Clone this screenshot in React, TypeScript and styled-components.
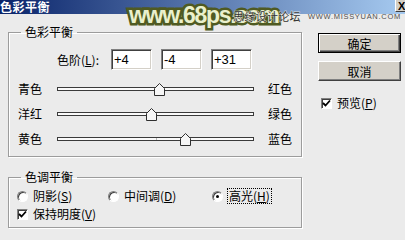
import { createGlobalStyle, styled } from "styled-components";

const GlobalStyle = createGlobalStyle`
  html, body {
    margin: 0;
    padding: 0;
    background: #ebebeb;
  }
  body {
    font-family: "Noto Sans CJK SC", "Liberation Sans", sans-serif;
    font-size: 12px;
    color: #000;
  }
`;

interface SliderProp {
  left: string;
  right: string;
  value: number;
}

const sliders: SliderProp[] = [
  { left: "青色", right: "红色", value: 4 },
  { left: "洋红", right: "绿色", value: -4 },
  { left: "黄色", right: "蓝色", value: 31 },
];

const levels = ["+4", "-4", "+31"];

const Slider = ({ left, right, value }: SliderProp) => {
  const pct = (value + 100) / 200;
  return (
    <SliderRow>
      <SideLabel>{left}</SideLabel>
      <Track>
        <Tick />
        <Thumb style={{ left: `calc(${pct * 100}% - 5.5px)` }}>
          <svg width="11" height="13" viewBox="0 0 11 13">
            <polygon
              points="0.5,5.5 5.5,0.5 10.5,5.5 10.5,12.5 0.5,12.5"
              fill="#f6f6f6"
              stroke="#2e2e2e"
            />
          </svg>
        </Thumb>
      </Track>
      <RightLabel>{right}</RightLabel>
    </SliderRow>
  );
};

const CheckMark = () => (
  <svg width="9" height="9" viewBox="0 0 9 9">
    <path d="M1 4 L3.5 6.5 L8 1.5" fill="none" stroke="#000" strokeWidth="1.8" />
  </svg>
);

const App = () => {
  return (
    <>
      <GlobalStyle />
      <Dialog>
        <TitleBar>
          <TitleText>色彩平衡</TitleText>
          <CloseButton>X</CloseButton>
        </TitleBar>
        <Body>
          <LeftCol>
            <Group $pb={5}>
              <Legend>色彩平衡</Legend>
              <LevelRow>
                <LevelLabel>
                  色阶(<u>L</u>):
                </LevelLabel>
                {levels.map((v) => (
                  <LevelInput key={v}>{v}</LevelInput>
                ))}
              </LevelRow>
              <SliderList>
                {sliders.map((s) => (
                  <Slider key={s.left} {...s} />
                ))}
              </SliderList>
            </Group>
            <Group $pb={7} $mt={13}>
              <Legend>色调平衡</Legend>
              <RadioRow>
                <Option $width={91}>
                  <Radio />
                  <span>
                    阴影(<u>S</u>)
                  </span>
                </Option>
                <Option $width={104}>
                  <Radio />
                  <span>
                    中间调(<u>D</u>)
                  </span>
                </Option>
                <Option>
                  <Radio $checked />
                  <Focused>
                    高光(<u>H</u>)
                  </Focused>
                </Option>
              </RadioRow>
              <CheckRow>
                <CheckBox>
                  <CheckMark />
                </CheckBox>
                <span>
                  保持明度(<u>V</u>)
                </span>
              </CheckRow>
            </Group>
          </LeftCol>
          <RightCol>
            <Button $primary>确定</Button>
            <Button>取消</Button>
            <PreviewRow>
              <CheckBox>
                <CheckMark />
              </CheckBox>
              <span>
                预览(<u>P</u>)
              </span>
            </PreviewRow>
          </RightCol>
        </Body>
        <Watermark>www.68ps.com</Watermark>
        <SiteName>思缘设计论坛</SiteName>
        <SiteUrl>WWW.MISSYUAN.COM</SiteUrl>
      </Dialog>
    </>
  );
};

export default App;

const Dialog = styled.div`
  position: relative;
  width: 405px;
  height: 240px;
  overflow: hidden;
  background: #ebebeb;
`;

const TitleBar = styled.div`
  height: 14px;
  display: flex;
  justify-content: space-between;
  background: linear-gradient(to right, #0a246a, #a6caf0);
`;

const TitleText = styled.span`
  color: #fff;
  font-weight: bold;
  font-size: 12px;
  line-height: 14px;
  letter-spacing: 0.5px;
`;

const CloseButton = styled.span`
  width: 10px;
  height: 12px;
  box-sizing: border-box;
  padding-left: 2px;
  background: #d4d0c8;
  border-left: 1px solid #fff;
  border-bottom: 1px solid #404040;
  font-family: "Liberation Sans", sans-serif;
  font-weight: bold;
  font-size: 11px;
  line-height: 12px;
`;

const Body = styled.div`
  display: flex;
  padding: 11px 0 0 8px;
`;

const LeftCol = styled.div`
  width: 294px;
  display: flex;
  flex-direction: column;
`;

const Group = styled.fieldset<{ $pb: number; $mt?: number }>`
  margin: ${({ $mt }) => $mt ?? 0}px 0 0;
  padding: 0 0 ${({ $pb }) => $pb}px;
  min-inline-size: 0;
  border: 1px solid #9c9c9c;
  box-shadow: 1px 1px 0 #fff, inset 1px 1px 0 #fff;
`;

const Legend = styled.legend`
  margin-left: 12px;
  padding: 0 4px;
  font-size: 12px;
  line-height: 14px;
`;

const LevelRow = styled.div`
  display: flex;
  align-items: center;
  gap: 9px;
  margin-top: 10px;
  padding-left: 48px;
  height: 21px;
`;

const LevelLabel = styled.span`
  width: 45px;
  line-height: 14px;
`;

const LevelInput = styled.div`
  width: 41px;
  height: 21px;
  box-sizing: border-box;
  padding: 2px 0 0 2px;
  background: #fff;
  border: 1px solid;
  border-color: #808080 #fff #fff #808080;
  box-shadow: inset 1px 1px 0 #404040, inset -1px -1px 0 #d4d0c8;
  font-family: "Liberation Sans", sans-serif;
  font-size: 13px;
  line-height: 15px;
`;

const SliderList = styled.div`
  margin-top: 6px;
  display: flex;
  flex-direction: column;
`;

const SliderRow = styled.div`
  display: flex;
  align-items: center;
  height: 25px;
  padding-left: 9px;
`;

const SideLabel = styled.span`
  width: 39px;
  line-height: 14px;
`;

const RightLabel = styled.span`
  margin-left: 14px;
  line-height: 14px;
`;

const Track = styled.div`
  position: relative;
  width: 197px;
  height: 4px;
  box-sizing: border-box;
  border: 1px solid #3a3a3a;
  background: #fafafa;
`;

const Tick = styled.span`
  position: absolute;
  left: 50%;
  top: 0;
  width: 1px;
  height: 100%;
  background: #b8b8b8;
`;

const Thumb = styled.span`
  position: absolute;
  top: -5px;
  width: 11px;
  height: 13px;
  line-height: 0;
`;

const RadioRow = styled.div`
  display: flex;
  align-items: center;
  margin-top: 6px;
  padding-left: 8px;
  height: 12px;
`;

const Option = styled.label<{ $width?: number }>`
  display: flex;
  align-items: center;
  gap: 5px;
  width: ${({ $width }) => ($width ? `${$width}px` : "auto")};
  line-height: 14px;
`;

const Radio = styled.span<{ $checked?: boolean }>`
  width: 11px;
  height: 11px;
  box-sizing: border-box;
  border-radius: 50%;
  border: 1px solid;
  border-color: #808080 #fff #fff #808080;
  box-shadow: inset 1px 1px 0 #404040;
  background: #fff;
  display: flex;
  align-items: center;
  justify-content: center;

  &::after {
    content: "";
    width: 3px;
    height: 3px;
    border-radius: 50%;
    background: ${({ $checked }) => ($checked ? "#000" : "transparent")};
  }
`;

const Focused = styled.span`
  outline: 1px dotted #000;
  outline-offset: 0;
  padding: 0 1px;
`;

const CheckRow = styled.div`
  display: flex;
  align-items: center;
  gap: 5px;
  margin-top: 6px;
  padding-left: 8px;
  height: 12px;
  line-height: 14px;
`;

const CheckBox = styled.span`
  width: 11px;
  height: 11px;
  box-sizing: border-box;
  border: 1px solid;
  border-color: #808080 #fff #fff #808080;
  box-shadow: inset 1px 1px 0 #404040;
  background: #fff;
  display: flex;
  align-items: center;
  justify-content: center;
`;

const RightCol = styled.div`
  margin-left: 16px;
  padding-top: 8px;
  display: flex;
  flex-direction: column;
  gap: 8px;
`;

const Button = styled.div<{ $primary?: boolean }>`
  width: 83px;
  height: 20px;
  box-sizing: border-box;
  display: flex;
  align-items: center;
  justify-content: center;
  background: #d4d0c8;
  font-size: 12px;
  border: 1px solid;
  border-color: ${({ $primary }) =>
    $primary ? "#000" : "#fff #404040 #404040 #fff"};
  box-shadow: ${({ $primary }) =>
    $primary
      ? "inset 1px 1px 0 #fff, inset -1px -1px 0 #404040, inset -2px -2px 0 #808080"
      : "inset -1px -1px 0 #808080"};
`;

const PreviewRow = styled.div`
  display: flex;
  align-items: center;
  gap: 5px;
  margin-top: 8px;
  padding-left: 3px;
  height: 12px;
  line-height: 14px;
`;

const Watermark = styled.div`
  position: absolute;
  left: 129px;
  top: 1px;
  font-family: "Liberation Sans", sans-serif;
  font-weight: bold;
  font-size: 23px;
  line-height: 28px;
  letter-spacing: -1.3px;
  color: #eaf0cc;
  -webkit-text-stroke: 5px #4f5a22;
  paint-order: stroke fill;
  white-space: nowrap;
`;

const SiteName = styled.div`
  position: absolute;
  left: 233px;
  top: 9px;
  font-size: 11px;
  line-height: 14px;
  letter-spacing: 0.3px;
  color: #333;
  -webkit-text-stroke: 1px rgba(240, 240, 230, 0.8);
  paint-order: stroke fill;
  white-space: nowrap;
`;

const SiteUrl = styled.div`
  position: absolute;
  left: 308px;
  top: 12px;
  font-family: "Liberation Sans", sans-serif;
  font-size: 7.5px;
  line-height: 9px;
  letter-spacing: 0.7px;
  color: #505050;
  white-space: nowrap;
`;
